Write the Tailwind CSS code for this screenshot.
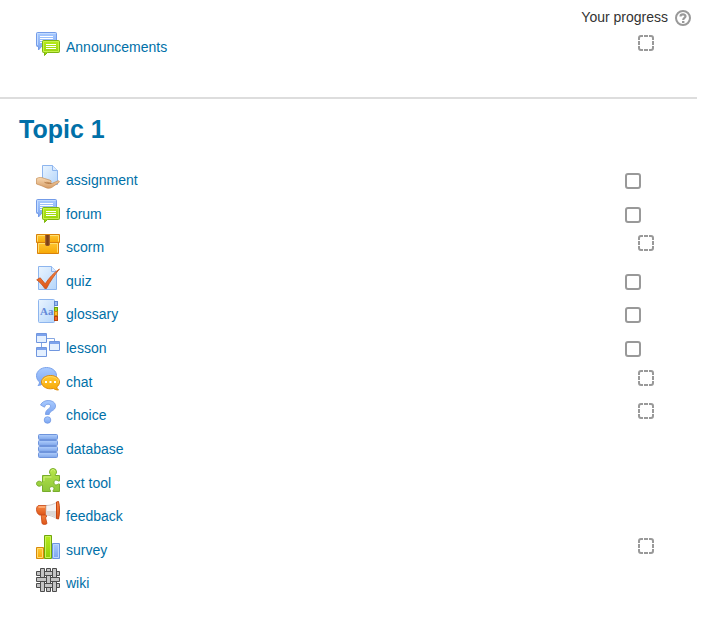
<!DOCTYPE html>
<html lang="en">
<head>
    <meta charset="UTF-8">
    <meta name="viewport" content="width=device-width, initial-scale=1.0">
    <title>Course: Topic 1</title>
    <script src="https://cdn.jsdelivr.net/npm/@tailwindcss/browser@4"></script>
</head>
<body class="bg-white font-['Liberation_Sans',Arial,sans-serif] text-[14px] text-[#333]">

    <!-- Shared shapes -->
    <svg class="absolute size-0" aria-hidden="true">
        <defs>
            <linearGradient id="blue" x1="0" y1="0" x2="0" y2="1">
                <stop offset="0" stop-color="#a9cbff"/>
                <stop offset="1" stop-color="#7ba4f0"/>
            </linearGradient>
            <linearGradient id="paper" x1="0" y1="0" x2="1" y2="1">
                <stop offset="0" stop-color="#eaf5ff"/>
                <stop offset="1" stop-color="#b5d5fa"/>
            </linearGradient>
            <linearGradient id="green" x1="0" y1="0" x2="0" y2="1">
                <stop offset="0" stop-color="#b8ec1c"/>
                <stop offset="1" stop-color="#8fcd08"/>
            </linearGradient>
            <linearGradient id="leaf" x1="0" y1="0" x2="0" y2="1">
                <stop offset="0" stop-color="#b9e64a"/>
                <stop offset="1" stop-color="#8cc63a"/>
            </linearGradient>
            <linearGradient id="orange" x1="0" y1="0" x2="0" y2="1">
                <stop offset="0" stop-color="#ffc935"/>
                <stop offset="1" stop-color="#f7a806"/>
            </linearGradient>
            <linearGradient id="skin" x1="0" y1="0" x2="0" y2="1">
                <stop offset="0" stop-color="#f8d9b2"/>
                <stop offset="1" stop-color="#d59c66"/>
            </linearGradient>
            <linearGradient id="red" x1="0" y1="0" x2="0" y2="1">
                <stop offset="0" stop-color="#f98a45"/>
                <stop offset="1" stop-color="#dd5518"/>
            </linearGradient>
            <linearGradient id="bar" x1="0" y1="0" x2="0" y2="1">
                <stop offset="0" stop-color="#b0cefc"/>
                <stop offset="1" stop-color="#7fa6ea"/>
            </linearGradient>
        </defs>
        <symbol id="icon-forum" viewBox="0 0 24 24">
            <path d="M1.500.5h18a1 1 0 0 1 1 1v12a1 1 0 0 1-1 1H5.500L2.500 18v-3.500h-1a1 1 0 0 1-1-1v-12a1 1 0 0 1 1-1z" fill="url(#blue)" stroke="#739be8"/>
            <path d="M1.500 13V1.500h18" fill="none" stroke="#c4dcff"/>
            <path d="M4 4.500h13M4 6.500h13M4 8.500h3M4 10.500h2" stroke="#fff"/>
            <path d="M7.500 8.500h15a1 1 0 0 1 1 1v10a1 1 0 0 1-1 1H11.500l-3 3v-3h-1a1 1 0 0 1-1-1v-10a1 1 0 0 1 1-1z" fill="url(#green)" stroke="#7db510"/>
            <path d="M7.500 19.500v-10h15v10z" fill="none" stroke="#c8f04c"/>
            <path d="M10 12.500h10M10 14.500h10M10 16.500h10" stroke="#fff"/>
        </symbol>
        <symbol id="box-auto" viewBox="0 0 16 16">
            <path d="M1 5V3a2 2 0 0 1 2-2h2M11 1h2a2 2 0 0 1 2 2v2M15 11v2a2 2 0 0 1-2 2h-2M5 15H3a2 2 0 0 1-2-2v-2M6 1h4M6 15h4M1 6v4M15 6v4" fill="none" stroke="#999" stroke-width="2"/>
        </symbol>
    </svg>

    <main class="pb-6">
        <section class="mr-[7px] border-b-2 border-[#ddd] pt-[7px] pb-[31px]">
            <div class="flex items-center justify-end gap-[7px] pr-[6px] leading-5">
                <span>Your progress</span>
                <a href="#" aria-label="Help with completion" class="mt-[2px]">
                    <svg class="size-4" viewBox="0 0 16 16" fill="none">
                        <circle cx="8" cy="8" r="7" stroke="#999" stroke-width="2"/>
                        <path d="M5.500 6.500C5.500 3.800 10.500 3.800 10.500 6.300C10.500 8 8.200 7.800 8.200 10" stroke="#999" stroke-width="2.200"/>
                        <rect x="7" y="11" width="2.400" height="2" fill="#999"/>
                    </svg>
                </a>
            </div>
            <ul class="mt-[5px] pl-9">
                <li class="flex h-[34px] items-start justify-between pr-[43px]">
                    <a href="#" class="flex gap-[6px] leading-[30px] text-[#0070a8]"><svg class="size-6"><use href="#icon-forum"/></svg>Announcements</a>
                    <span class="mt-[3px] grid"><svg class="col-start-1 row-start-1 size-4"><use href="#box-auto"/></svg><input type="checkbox" disabled aria-label="Announcements not completed" class="col-start-1 row-start-1 size-4 appearance-none"></span>
                </li>
            </ul>
        </section>

        <section class="mr-[7px] pt-[14px]">
            <h2 class="pl-[19px] text-[25px] leading-8 font-bold text-[#0070a8]">Topic 1</h2>

            <ul class="mt-5 grid min-h-[437px] auto-rows-fr pl-9">
                <li class="flex items-start justify-between pr-14">
                    <a href="#" class="flex gap-[6px] leading-[30px] text-[#0070a8]">
                        <svg class="size-6" viewBox="0 0 24 24">
                            <path d="M6.500.5h10l5 5v14h-15z" fill="url(#paper)" stroke="#8db5ee"/>
                            <path d="M16.500.5v5h5" fill="#dcebff" stroke="#8db5ee"/>
                            <path d="M.5 13.500C3 12 6 12.300 8.500 13.500L14 15.200c1.800.6 1.500 2.300-.5 2.300l-3-.2 6 .9 5-2.200c1.800-.6 2.500.6 1.300 1.500L16 22.300c-1.500 1-3.500 1.200-5.500.6L5 20.500.5 19z" fill="url(#skin)" stroke="#c58c55" stroke-width=".7"/>
                            <path d="M8.500 17.300c2 1 4.500 1.400 7 1.200" fill="none" stroke="#a86e39" stroke-width=".8"/>
                        </svg>assignment</a>
                    <input type="checkbox" aria-label="Mark assignment as complete" class="mt-2 size-4 appearance-none rounded-[3px] border-2 border-[#999]">
                </li>
                <li class="flex items-start justify-between pr-14">
                    <a href="#" class="flex gap-[6px] leading-[30px] text-[#0070a8]"><svg class="size-6"><use href="#icon-forum"/></svg>forum</a>
                    <input type="checkbox" aria-label="Mark forum as complete" class="mt-2 size-4 appearance-none rounded-[3px] border-2 border-[#999]">
                </li>
                <li class="flex items-start justify-between pr-[43px]">
                    <a href="#" class="flex gap-[6px] leading-[30px] text-[#0070a8]">
                        <svg class="size-6" viewBox="0 0 24 24">
                            <path d="M1.500 9.500h21v12h-21z" fill="url(#orange)" stroke="#d9820b"/>
                            <path d="M.5 2.500h23v8H.5z" fill="url(#orange)" stroke="#d9820b"/>
                            <path d="M1.500 9.500v-6h21v6M2.500 20.500v-9h19v9" fill="none" stroke="#ffdf70"/>
                            <path d="M9 3h5v10l-1.500 1h-2L9 13z" fill="#a9652c"/>
                            <path d="M11.500 3v10.500" stroke="#7a4018" stroke-width="2.500"/>
                        </svg>scorm</a>
                    <span class="mt-[3px] grid"><svg class="col-start-1 row-start-1 size-4"><use href="#box-auto"/></svg><input type="checkbox" disabled aria-label="scorm not completed" class="col-start-1 row-start-1 size-4 appearance-none"></span>
                </li>
                <li class="flex items-start justify-between pr-14">
                    <a href="#" class="flex gap-[6px] leading-[30px] text-[#0070a8]">
                        <svg class="size-6" viewBox="0 0 24 24">
                            <path d="M2.500.5h13l5 5v18h-18z" fill="url(#paper)" stroke="#8db5ee"/>
                            <path d="M15.500.5v5h5" fill="#dcebff" stroke="#8db5ee"/>
                            <path d="M.7 13.800l3.500-2 5 6C13 12 18 6.500 23.500 3 18.500 9 14 15.500 10.500 22.500H8.800C6.500 19 4 16.500.7 13.800z" fill="url(#red)" stroke="#c4501c" stroke-width=".8"/>
                        </svg>quiz</a>
                    <input type="checkbox" aria-label="Mark quiz as complete" class="mt-2 size-4 appearance-none rounded-[3px] border-2 border-[#999]">
                </li>
                <li class="flex items-start justify-between pr-14">
                    <a href="#" class="flex gap-[6px] leading-[30px] text-[#0070a8]">
                        <svg class="size-6" viewBox="0 0 24 24">
                            <rect x="2.500" y=".5" width="16" height="23" rx="1" fill="url(#paper)" stroke="#8db5ee"/>
                            <rect x="18.500" y="2.500" width="3" height="4" fill="#9bbcf2" stroke="#5f87cf"/>
                            <rect x="18.500" y="8.500" width="3" height="4" fill="#a4dc20" stroke="#6c9c0b"/>
                            <rect x="18.500" y="12.500" width="3" height="4" fill="#ffc22c" stroke="#c9850a"/>
                            <rect x="18.500" y="17.500" width="3" height="4" fill="#f2672a" stroke="#b8430f"/>
                            <text x="4" y="16" font-family="Liberation Serif, serif" font-size="11" font-weight="bold" fill="#6389d8">Aa</text>
                        </svg>glossary</a>
                    <input type="checkbox" aria-label="Mark glossary as complete" class="mt-2 size-4 appearance-none rounded-[3px] border-2 border-[#999]">
                </li>
                <li class="flex items-start justify-between pr-14">
                    <a href="#" class="flex gap-[6px] leading-[30px] text-[#0070a8]">
                        <svg class="size-6" viewBox="0 0 24 24">
                            <path d="M11 5.500h7.500V9M5.500 10v5" fill="none" stroke="#86a7e2"/>
                            <g fill="#e4f0ff" stroke="#7096df">
                                <path d="M.5.500h10v9H.5z"/>
                                <path d="M13.500 8.500h10v9h-10z"/>
                                <path d="M.5 14.500h10v9H.5z"/>
                            </g>
                            <path d="M1 2h9M14 10h9M1 16h9" stroke="#7da3ec" stroke-width="2"/>
                        </svg>lesson</a>
                    <input type="checkbox" aria-label="Mark lesson as complete" class="mt-2 size-4 appearance-none rounded-[3px] border-2 border-[#999]">
                </li>
                <li class="flex items-start justify-between pr-[43px]">
                    <a href="#" class="flex gap-[6px] leading-[30px] text-[#0070a8]">
                        <svg class="size-6" viewBox="0 0 24 24">
                            <path d="M10.500.5c5.500 0 10 3.500 10 8s-4.500 8.500-10 8.500c-1.200 0-2.400-.2-3.500-.5-1.500 1.300-3 2-5 2 1-1 1.500-2 1.500-3.500C1.500 13.500.5 11.200.5 8.700c0-4.500 4.500-8.200 10-8.200z" fill="url(#blue)" stroke="#7aa2ea"/>
                            <path d="M14.500 8.500c5 0 9 2.700 9 6.500 0 2-1 3.700-2.800 5 .2 1.200.8 2 1.800 3-2 0-3.500-.5-5-1.500-1 .2-2 .3-3 .3-5 0-9-3-9-6.800s4-6.500 9-6.500z" fill="url(#orange)" stroke="#df8d0b"/>
                            <path d="M7 16c-1.500-3.500 2.500-6.400 7.500-6.400S24 12.500 22 16" fill="none" stroke="#ffe07a" stroke-width=".7"/>
                            <path d="M9 14h2v2H9zM13.500 14h2v2h-2zM18 14h2v2h-2z" fill="#fff"/>
                        </svg>chat</a>
                    <span class="mt-[3px] grid"><svg class="col-start-1 row-start-1 size-4"><use href="#box-auto"/></svg><input type="checkbox" disabled aria-label="chat not completed" class="col-start-1 row-start-1 size-4 appearance-none"></span>
                </li>
                <li class="flex items-start justify-between pr-[43px]">
                    <a href="#" class="flex gap-[6px] leading-[30px] text-[#0070a8]">
                        <svg class="size-6" viewBox="0 0 24 24">
                            <path d="M4.500 5C6 2 8.800.5 12.200.5c4.300 0 7.300 2.200 7.300 5.500 0 5-6 4.500-6.300 8.500H9.500c-.3-5.500 5-5.500 5-8.300 0-1.300-1-2-2.500-2-1.800 0-2.800 1-3.500 3z" fill="url(#blue)" stroke="#7198e3" stroke-width=".8"/>
                            <circle cx="11.500" cy="20" r="3.300" fill="url(#blue)" stroke="#7198e3" stroke-width=".8"/>
                        </svg>choice</a>
                    <span class="mt-[3px] grid"><svg class="col-start-1 row-start-1 size-4"><use href="#box-auto"/></svg><input type="checkbox" disabled aria-label="choice not completed" class="col-start-1 row-start-1 size-4 appearance-none"></span>
                </li>
                <li>
                    <a href="#" class="flex gap-[6px] leading-[30px] text-[#0070a8]">
                        <svg class="size-6" viewBox="0 0 24 24">
                            <g fill="url(#bar)" stroke="#6e94dc">
                                <rect x="2.500" y=".5" width="19" height="5" rx="1"/>
                                <rect x="2.500" y="6.500" width="19" height="5" rx="1"/>
                                <rect x="2.500" y="12.500" width="19" height="5" rx="1"/>
                                <rect x="2.500" y="18.500" width="19" height="5" rx="1"/>
                            </g>
                        </svg>database</a>
                </li>
                <li>
                    <a href="#" class="flex gap-[6px] leading-[30px] text-[#0070a8]">
                        <svg class="size-6" viewBox="0 0 24 24">
                            <path d="M6.500 7.500h8.300c.4-1-1.300-1.500-1.300-3.500a3.500 3.500 0 0 1 7 0c0 2-1.700 2.500-1.300 3.500h4.300v5.500c-1.500.5-2-1-3.500-1-2.700 0-2.700 5 0 5 1.500 0 2-1.500 3.500-1v7.500h-6.500c-.5-1 1-1.500 1-3 0-2.500-4.500-2.500-4.500 0 0 1.500 1.500 2 1 3H6.500v-6.300c-1-.5-1.500 1-3.200 1-3.700 0-3.700-5 0-5 1.700 0 2.200 1.500 3.200 1z" fill="url(#leaf)" stroke="#78ad2c"/>
                            <path d="M8 13V9h7.500M15 3.500c.5-2.500 3.500-2.500 4 0" fill="none" stroke="#d3f27a"/>
                        </svg>ext tool</a>
                </li>
                <li>
                    <a href="#" class="flex gap-[6px] leading-[30px] text-[#0070a8]">
                        <svg class="size-6" viewBox="0 0 24 24">
                            <path d="M5 12h5.500v4l-1 .5 1.500 6c-1.200 1.300-3.800 1.300-5 0z" fill="url(#red)" stroke="#c54412" stroke-width=".8"/>
                            <path d="M3 4.500h8v9.500H3.500C1.500 13 .5 11 .5 8.500s1-4 2.500-4z" fill="url(#red)" stroke="#c54412" stroke-width=".8"/>
                            <path d="M10 4.500c4 0 8-1.200 11-3.500v17c-3-2.500-7-3.700-11-4z" fill="#f5f3f3" stroke="#b4aaa6" stroke-width=".6"/>
                            <path d="M10.500 10h10.500v7c-3-2-6.500-3.200-10.500-3.500z" fill="#dcd8d6"/>
                            <path d="M20.500 1l2-.5c1.300 4 1.300 13 0 17.500l-2-.5z" fill="url(#red)" stroke="#c54412"/>
                            <path d="M2.500 6h6.500" stroke="#ffb27c" stroke-width="1.500"/>
                        </svg>feedback</a>
                </li>
                <li class="flex items-start justify-between pr-[43px]">
                    <a href="#" class="flex gap-[6px] leading-[30px] text-[#0070a8]">
                        <svg class="size-6" viewBox="0 0 24 24">
                            <path d="M.5 12.500h7v11h-7z" fill="url(#orange)" stroke="#d98a0b"/>
                            <path d="M16.500 8.500h7v15h-7z" fill="url(#blue)" stroke="#6c94e0"/>
                            <path d="M8.500.5h7v23h-7z" fill="url(#green)" stroke="#6fa60c"/>
                            <path d="M1.500 22.500v-9h5v9z" fill="none" stroke="#ffdc70"/>
                            <path d="M9.500 22.500v-21h5v21z" fill="none" stroke="#cbf25a"/>
                            <path d="M17.500 22.500v-13h5v13z" fill="none" stroke="#bdd6ff"/>
                        </svg>survey</a>
                    <span class="mt-[3px] grid"><svg class="col-start-1 row-start-1 size-4"><use href="#box-auto"/></svg><input type="checkbox" disabled aria-label="survey not completed" class="col-start-1 row-start-1 size-4 appearance-none"></span>
                </li>
                <li>
                    <a href="#" class="flex gap-[6px] leading-[30px] text-[#0070a8]">
                        <svg class="size-6" viewBox="0 0 24 24" fill="#c4c4c4" stroke="#4c4c4c">
                            <path d="M4.500.5h4v23h-4zM10.500.5h4v23h-4zM16.500.5h4v23h-4z"/>
                            <path d="M.5 3.500h23v4H.5zM.5 9.500h23v4H.5zM.5 15.500h23v4H.5z"/>
                            <!-- strands that pass over -->
                            <path d="M4 3h5v5H4zM4 15h5v5H4zM10 9h5v5h-5zM16 3h5v5h-5zM16 15h5v5h-5z" stroke="none"/>
                            <path d="M4.500 3v5M8.500 3v5M4.500 15v5M8.500 15v5M10.500 9v5M14.500 9v5M16.500 3v5M20.500 3v5M16.500 15v5M20.500 15v5"/>
                        </svg>wiki</a>
                </li>
            </ul>
        </section>
    </main>

</body>
</html>
